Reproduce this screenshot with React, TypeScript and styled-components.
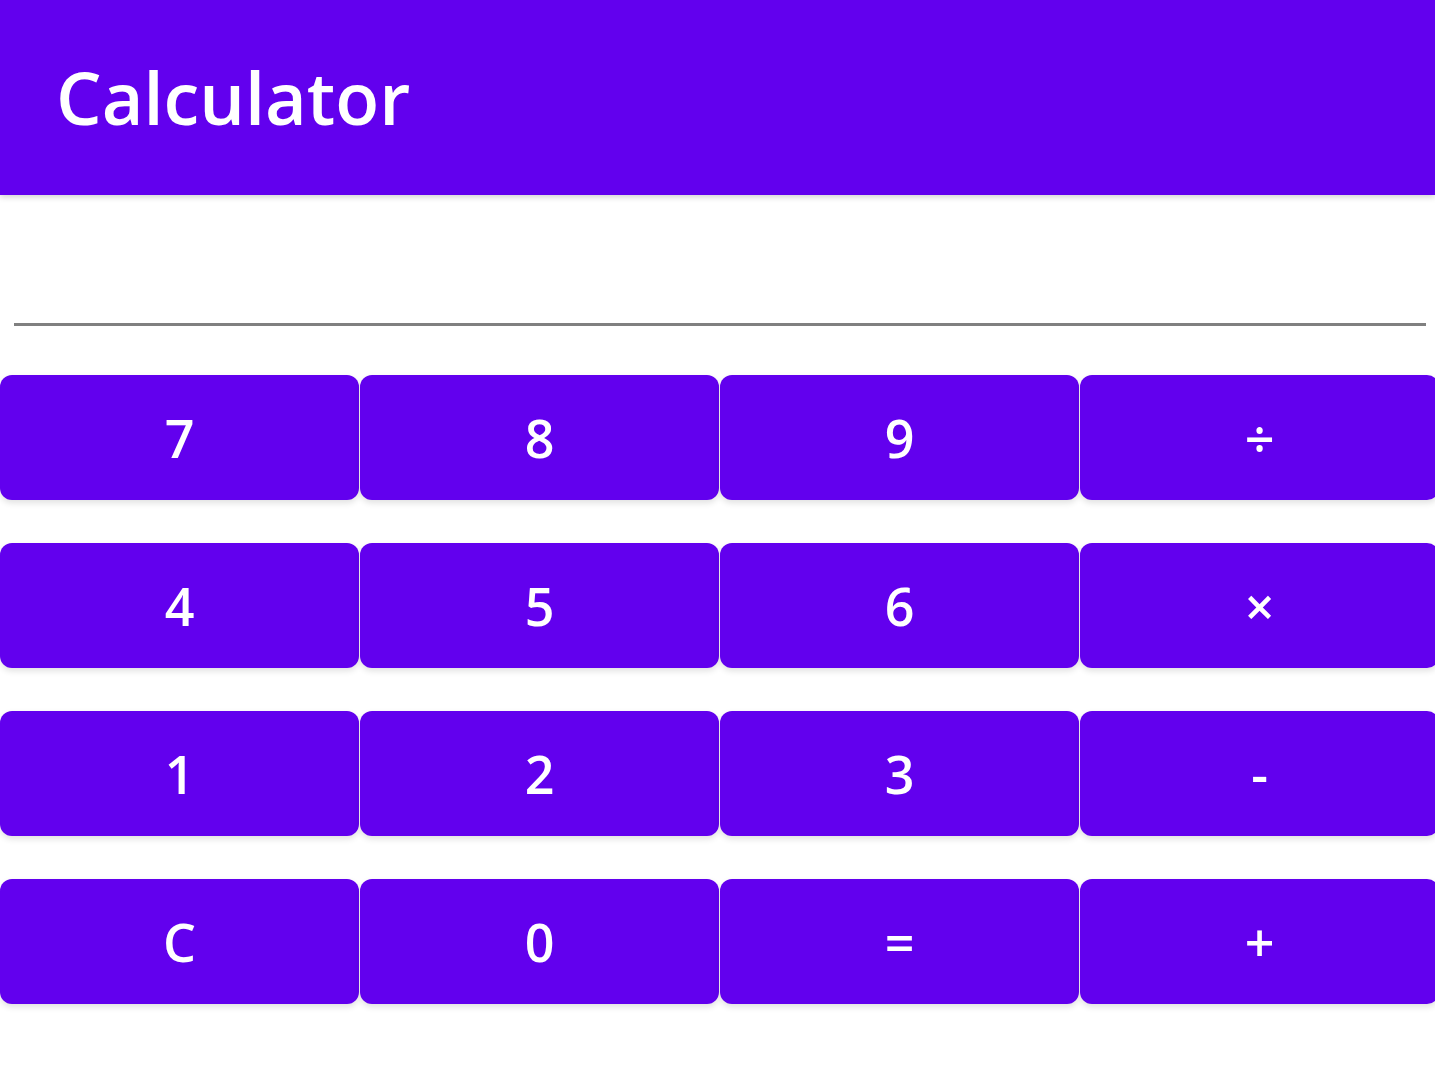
import React from 'react';
import styled, { createGlobalStyle } from 'styled-components';

const GlobalStyle = createGlobalStyle`
  html, body {
    margin: 0;
    padding: 0;
    background: #ffffff;
    font-family: "Open Sans", "Noto Sans", sans-serif;
  }
`;

const keys = ['7', '8', '9', '÷', '4', '5', '6', '×', '1', '2', '3', '-', 'C', '0', '=', '+'];

const Calculator = () => {
  return (
    <Page>
      <GlobalStyle />
      <AppBar>
        <Title>Calculator</Title>
      </AppBar>
      <Display>
        <DisplayField type="text" aria-label="Result" readOnly />
      </Display>
      <Keypad>
        {keys.map((k) => (
          <Key key={k} type="button">
            {k}
          </Key>
        ))}
      </Keypad>
    </Page>
  );
};

const Page = styled.div`
  width: 1435px;
  min-height: 1076px;
  overflow: hidden;
`;

const AppBar = styled.header`
  height: 195px;
  background-color: #6200ee;
  display: flex;
  align-items: center;
  padding-left: 56px;
  box-shadow: 0 2px 6px rgba(0, 0, 0, 0.18);
  position: relative;
  z-index: 1;
`;

const Title = styled.h1`
  margin: 0;
  color: #ffffff;
  font-family: "Open Sans", "Noto Sans", sans-serif;
  font-size: 72px;
  font-weight: 600;
  line-height: 1;
  padding-bottom: 2px;
`;

const Display = styled.div`
  padding: 0 9px 0 14px;
  height: 180px;
  display: flex;
  align-items: flex-end;
`;

const DisplayField = styled.input`
  width: 100%;
  border: none;
  border-bottom: 3px solid #808080;
  outline: none;
  background: none;
  font-size: 56px;
  height: 100px;
  margin-bottom: 49px;
`;

const Keypad = styled.div`
  display: grid;
  grid-template-columns: repeat(4, 359px);
  column-gap: 1px;
  row-gap: 43px;
`;

const Key = styled.button`
  height: 125px;
  border: none;
  border-radius: 12px;
  background-color: #6200ee;
  color: #ffffff;
  font-family: "Open Sans", "Noto Sans", sans-serif;
  font-size: 52px;
  font-weight: 600;
  padding: 0;
  box-shadow: 0 3px 6px rgba(0, 0, 0, 0.12);
  cursor: pointer;
`;

export default Calculator;
